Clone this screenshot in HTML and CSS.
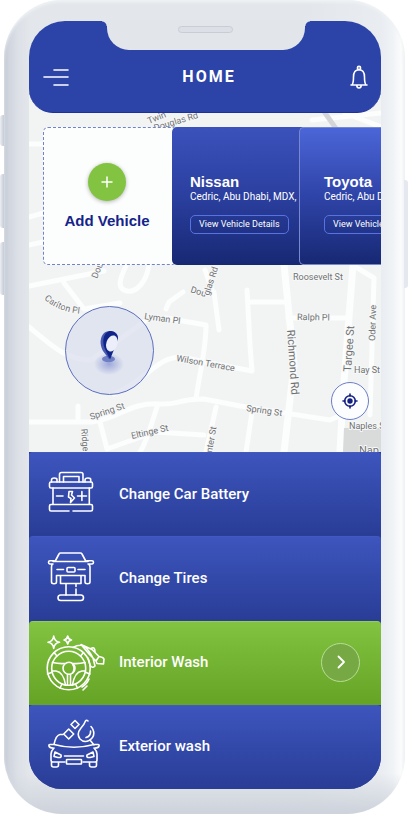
FILE: index.html
```html
<!DOCTYPE html>
<html lang="en">
<head>
<meta charset="utf-8">
<meta name="viewport" content="width=device-width, initial-scale=1">
<title>Home</title>
<link rel="stylesheet" href="styles.css">
</head>
<body>
<div class="phone">
  <span class="side-key side-key-mute"></span>
  <span class="side-key side-key-up"></span>
  <span class="side-key side-key-down"></span>
  <span class="side-key side-key-power"></span>
  <div class="notch"><span class="speaker"></span></div>
  <div class="screen">
    <header class="topbar">
      <button class="icon-button" aria-label="Menu">
        <svg width="26" height="24" viewBox="0 0 26 24"><path d="M11 5H25M1 12H25M11 20H25"/></svg>
      </button>
      <h1 class="title">HOME</h1>
      <button class="icon-button" aria-label="Notifications">
        <svg width="20" height="26" viewBox="0 0 20 26"><circle cx="10" cy="4" r="1.6"/><path d="M2 21H18M3 21C4.500 19 4.500 17 4.500 13C4.500 8.500 6.500 5.800 10 5.800S15.500 8.500 15.500 13C15.500 17 15.500 19 17 21M7.800 21.500C8 24.800 12 24.800 12.200 21.500"/></svg>
      </button>
    </header>

    <main>
      <section class="map">
        <svg class="map-canvas" viewBox="29 89 352 363" preserveAspectRatio="xMidYMin slice" aria-hidden="true">
          <g class="roads">
            <path d="M29 286L104 271M64 283L84 309L120 303M149 264C147 282 136 293 127 291C117 289 119 280 126 266M29 327C52 346 66 360 91 360L145 321M114 394C150 378 156 357 182 357L205 362L252 371L250 345L247 290M166 309L169 302L183 292M212 290L205 270M29 422H92C120 418 130 402 160 404C180 405 176 399 204 399L240 406L330 420L344 414M78 422V406M100 422L107 449M107 449L155 432L204 435M158 404C151 424 148 440 140 452M196 399C200 370 206 350 206 325L166 318M214 292L219 330M250 302H288M288 318H346M216 407L206 452M252 412L246 452"/>
            <path d="M29 217L75 204M29 245L70 236M29 144H70M70 130Q62 140 67 165M345 113L381 127M312 120L381 113M354 266L374 278L370 415M388 262L350 262"/>
            <path class="road-wide" d="M284 264L294 365L284 452M353 265L343 395L340 452"/>
          </g>
          <path class="block" d="M344 428H381V452H343Z"/>
          <path class="shade" d="M326 110L340 130H334L322 113Z"/>
          <path id="carlton" class="guide" d="M44 299Q58 312 82 314"/>
          <g class="labels">
            <text transform="translate(149 124) rotate(-22)">Twin</text>
            <text transform="translate(155 131) rotate(-17)">Douglas Rd</text>
            <text transform="translate(97 279) rotate(-68)">Douglas</text>
            <text><textPath href="#carlton">Carlton Pl</textPath></text>
            <text transform="translate(190 292) rotate(18)">Dou</text>
            <text transform="translate(209 296) rotate(-72)">glas Rd</text>
            <text transform="translate(144 319) rotate(8)">Lyman Pl</text>
            <text transform="translate(176 361) rotate(10)">Wilson Terrace</text>
            <text transform="translate(91 420) rotate(-19)">Spring St</text>
            <text transform="translate(132 439) rotate(-13)">Eltinge St</text>
            <text transform="translate(81 429) rotate(85)">Ridge</text>
            <text transform="translate(293 280)">Roosevelt St</text>
            <text transform="translate(297 320) rotate(1)">Ralph Pl</text>
            <text transform="translate(375 341) rotate(-88)">Oder Ave</text>
            <text transform="translate(354 373)">Hay St</text>
            <text transform="translate(246 411) rotate(8)">Spring St</text>
            <text transform="translate(349 429)">Naples S</text>
            <text transform="translate(212 453) rotate(-80)">nter St</text>
            <text class="label-large" transform="translate(287 330) rotate(86)">Richmond Rd</text>
            <text class="label-large" transform="translate(351 372) rotate(-86)">Targee St</text>
            <text class="label-large" transform="translate(359 454)">Nap</text>
          </g>
        </svg>

        <div class="vehicles">
          <button class="add-card">
            <span class="add-badge"><svg width="12" height="12" viewBox="0 0 12 12"><path d="M6 1V11M1 6H11"/></svg></span>
            <span class="add-label">Add Vehicle</span>
          </button>
          <article class="vehicle">
            <h2>Nissan</h2>
            <p>Cedric, Abu Dhabi, MDX,</p>
            <a class="details" href="#nissan">View Vehicle Details</a>
          </article>
          <article class="vehicle vehicle-next">
            <h2>Toyota</h2>
            <p>Cedric, Abu Dhabi, MDX,</p>
            <a class="details" href="#toyota">View Vehicle Details</a>
          </article>
        </div>

        <div class="pin">
          <svg width="40" height="50" viewBox="0 0 40 50">
            <defs><radialGradient id="glow"><stop offset="0" stop-color="#5a6bc4" stop-opacity=".5"/><stop offset="1" stop-color="#5a6bc4" stop-opacity="0"/></radialGradient></defs>
            <ellipse cx="19" cy="38" rx="15" ry="11" fill="url(#glow)"/>
            <ellipse cx="18.500" cy="33" rx="6.500" ry="3.200" fill="#6f7fc4"/>
            <path d="M19 33L13 25C8 16 11 5 20 5C25 5 28 8 28 12L23 24Z" fill="#4557ae"/>
            <path d="M20 33.500L15.500 24C11 15 14 5 21 5C26 6 28 9 28 13L23 26Z" fill="#0f2388"/>
            <ellipse cx="22" cy="17.500" rx="5.500" ry="8.300" transform="rotate(18 22 17)" fill="#eceffa"/>
          </svg>
        </div>
        <button class="locate" aria-label="My location">
          <svg width="16" height="16" viewBox="0 0 16 16"><circle cx="8" cy="8" r="5.300"/><path d="M8 1V3M8 13V15M1 8H3M13 8H15"/><circle class="dot" cx="8" cy="8" r="2.700"/></svg>
        </button>
      </section>

      <nav class="services">
        <button class="service">
          <svg class="service-icon" viewBox="0 0 62 60"><rect x="4.500" y="18" width="43" height="6" rx="1.500"/><path d="M14.500 18V10.500Q14.500 8.500 16.500 8.500H36Q38 8.500 38 10.500V18M18.500 18V12.500H34V18M6.500 18V16Q6.500 14 9.300 14T12 16V18M40 18V16Q40 14 43 14T45.700 16V18M8 24V40.500M44.300 24V40.500M24 47H6Q4.500 47 4.500 45.500V42Q4.500 40.500 6 40.500H46Q47.500 40.500 47.500 42V45.500Q47.500 47 46 47H28M11.500 32H18M32.500 32H41.500M36.900 27.500V36.500M24 27.500H27.500L26.500 31L29.500 34L25.500 38.500L26 34.500L23.500 33Z"/></svg>
          <span>Change Car Battery</span>
        </button>
        <button class="service">
          <svg class="service-icon" viewBox="0 0 62 60"><path d="M10 13.500L14 6Q14.500 5 15.500 5H35.500Q36.500 5 37 6L41 13.500M9 12.800H5Q3.500 12.800 3.500 14.200T5 16H8M42 12.800H47Q48.500 12.800 48.500 14.200T47 16H43M8 13.500H43M7.500 16Q6.500 17 6.500 19V34Q6.500 35.700 9 35.700T11.500 34V27.500H40V34Q40 35.700 42.500 35.700T45 34V19Q45 17 43.500 16M12 21.500H18.500M33 21.500H40M15.500 27.500V35.500H36V27.500M21 36V47M31 36V38.500M31 41V47"/><rect x="22" y="19.500" width="8" height="4.500" rx="1"/><rect x="13" y="47" width="25.500" height="5.500" rx="2.700"/></svg>
          <span>Change Tires</span>
        </button>
        <button class="service service-active">
          <svg class="service-icon" viewBox="0 0 62 60"><path d="M8.700 4Q9.500 9.500 14.500 10.300Q9.500 11 8.700 16.500Q8 11 3 10.300Q8 9.500 8.700 4ZM22.700 4Q23.300 7.500 26.500 8Q23.300 8.500 22.700 12Q22 8.500 19 8Q22 7.500 22.700 4Z"/><circle cx="23.700" cy="36.300" r="21.500"/><circle cx="23.700" cy="36.300" r="17"/><circle cx="24" cy="36.300" r="6"/><path d="M7.500 30.500Q14 32 20 31.500M28 31.500Q34 32 40 30.500M7 39H11Q18.500 40 20.500 53M40.500 39H37Q29.500 40 27.500 53M22.500 42.500V53M25.500 42.500V53M9 20.500L12 24M38.500 20.500L35.500 24M2.500 42L6.500 40.500M45 42L41 40.500M15 56L17 52M32.500 56L30.500 52M27.500 32Q30.500 36.500 27.500 41M28 15.500Q34 12 39 14Q44 18 48 26L50 34Q47 37 45 33L43 26M36 12.500L47 17.500L54 24.500L51 29L44 22ZM46 16.500Q50 14 50 20M54 24.500Q58 25 59 27L58.500 32L52 31.500L51 29M44 47Q42 52 37 55M42 54L38 58"/></svg>
          <span>Interior Wash</span>
          <i class="go"><svg width="10" height="14" viewBox="0 0 10 14"><path d="M2.500 1.500L8 7L2.500 12.500"/></svg></i>
        </button>
        <button class="service">
          <svg class="service-icon" viewBox="0 0 62 60"><path d="M9 28.500Q11 19 15 18.500L18 18.500M23.700 13L28.700 18L23.700 23L18.700 18ZM30 4.500L34 8.500L30 12.500L26 8.500ZM43 5Q41.500 3.500 40.500 5Q39 9 36 12Q31 18 35 23Q39 27 44 24.500Q50 21 48.500 15Q48 12.500 46 10.500M45.500 15Q46 20 41 21.500M45 24L49 29M9 28.500H5Q3.500 28.500 4 30Q4.500 32 8 32M9 28.500Q29 34 49 28.500H53Q54.500 28.500 54 30Q53.500 32 50 32M9 32Q6 35 6 38V44Q6 46 8 46H20M38 46H50Q52 46 52 44V38Q52 35 49 32M10 36L16 39Q17 42 13 41.500L9 40.500ZM48 36L42 39Q41 42 45 41.500L49 40.500ZM19.500 40H38.500M6.500 46V49Q6.500 51 8.500 51H11.500Q13.500 51 13.500 49V46M44.500 46V49Q44.500 51 46.500 51H49.500Q51.500 51 51.500 49V46"/><rect x="21.500" y="43.500" width="15" height="4.500" rx=".5"/></svg>
          <span>Exterior wash</span>
        </button>
      </nav>
    </main>
  </div>
</div>
</body>
</html>
```
FILE: styles.css
```css
* {
  box-sizing: border-box;
}

body {
  margin: 0;
  background: #fff;
  font-family: Roboto, "Liberation Sans", sans-serif;
}

button {
  margin: 0;
  padding: 0;
  border: 0;
  background: none;
  color: inherit;
  font: inherit;
  cursor: pointer;
}

svg {
  display: block;
  fill: none;
  stroke-linecap: round;
  stroke-linejoin: round;
}

/* Device frame */
.phone {
  position: relative;
  margin: 0 4px;
  padding: 21px 24px 25px 25px;
  border-radius: 58px;
  background:
    linear-gradient(to bottom, rgba(226, 231, 235, 0) 95%, #cdd2db 100%),
    linear-gradient(to right, #c3c9d4 0, #d0d5de 5px, #dce0e7 14px, #e3e7eb 26px, #e3e7eb 75%, #e9edf1 calc(100% - 24px), #f0f3f6 calc(100% - 12px), #fbfcfc calc(100% - 4px), #eef0f4 100%);
  box-shadow: inset 0 2px 3px #f0f3f5;
}

.side-key {
  position: absolute;
  left: -4px;
  width: 4px;
  border-radius: 3px 0 0 3px;
  background: linear-gradient(to right, #eceef2, #c6cbd6);
}

.side-key-mute {
  top: 115px;
  height: 31px;
}

.side-key-up {
  top: 174px;
  height: 54px;
}

.side-key-down {
  top: 242px;
  height: 53px;
}

.side-key-power {
  top: 180px;
  right: -3px;
  left: auto;
  height: 108px;
  border-radius: 0 3px 3px 0;
  background: #e5e8ee;
}

.notch {
  position: absolute;
  z-index: 3;
  top: 20px;
  left: 50%;
  width: 198px;
  height: 30px;
  margin-left: -98px;
  border-radius: 0 0 22px 22px;
  background: #e2e6eb;
}

.notch::before,
.notch::after {
  content: "";
  position: absolute;
  top: 1px;
  width: 5px;
  height: 5px;
}

.notch::before {
  right: 100%;
  background: radial-gradient(circle at 0 100%, #2c43a8 4px, #e2e6eb 5px);
}

.notch::after {
  left: 100%;
  background: radial-gradient(circle at 100% 100%, #2c43a8 4px, #e2e6eb 5px);
}

.speaker {
  display: block;
  width: 55px;
  height: 7px;
  margin: 6px auto 0;
  border: 1px solid #c8ccd5;
  border-radius: 4px;
  background: #dce0e6;
}

.screen {
  overflow: hidden;
  border-radius: 36px 36px 33px 33px;
  background: #f2f4f4;
}

/* Top bar */
.topbar {
  position: relative;
  z-index: 2;
  display: flex;
  align-items: center;
  justify-content: space-between;
  padding: 40px 12px 19px 14px;
  border-bottom: 1px solid #1e319a;
  border-radius: 0 0 24px 24px;
  background: #2c43a8;
  color: #fff;
}

.icon-button {
  height: 32px;
  display: flex;
  align-items: center;
}

.icon-button svg {
  stroke: #fff;
  stroke-width: 1.6;
}

.title {
  margin: 0;
  font-size: 16px;
  line-height: 32px;
  font-weight: 700;
  letter-spacing: 2px;
}

/* Map */
.map {
  position: relative;
  min-height: 363px;
  margin-top: -24px;
  padding: 38px 0 0 14px;
}

.map-canvas {
  position: absolute;
  inset: 0;
  width: 100%;
  height: 100%;
}

.roads path {
  stroke: #fcfdfd;
  stroke-width: 5;
}

.roads .road-wide {
  stroke-width: 7;
}

.block {
  fill: #d9dada;
}

.shade {
  fill: #d3d5d6;
}

.guide {
  stroke: none;
}

.labels text {
  fill: #707273;
  stroke: #f7f8f8;
  stroke-width: 2px;
  paint-order: stroke;
  font-size: 9px;
}

.labels .label-large {
  font-size: 11px;
}

/* Vehicle cards */
.vehicles {
  position: relative;
  display: flex;
  height: 138px;
  overflow: hidden;
}

.add-card {
  flex: none;
  display: flex;
  flex-direction: column;
  align-items: center;
  gap: 10px;
  width: 134px;
  padding: 35px 6px 0 0;
  border: 1px dashed #7283c8;
  border-radius: 5px;
  background: #fcfdfd;
}

.add-badge {
  display: grid;
  place-items: center;
  width: 38px;
  height: 38px;
  border-radius: 50%;
  background: #82c341;
  box-shadow: 0 1px 4px rgba(0, 0, 0, 0.3);
}

.add-badge svg {
  stroke: #fff;
  stroke-width: 1.5;
}

.add-label {
  color: #14248a;
  font-family: "Liberation Sans", sans-serif;
  font-size: 15px;
  line-height: 20px;
  font-weight: 700;
}

.vehicle {
  flex: none;
  width: 134px;
  margin-left: -5px;
  padding: 46px 0 0 18px;
  border-radius: 5px;
  background: linear-gradient(#3b52bc, #2b3f9f 50%, #172873);
  color: #fff;
  white-space: nowrap;
}

.vehicle-next {
  width: 144px;
  margin-left: -7px;
  padding-left: 24px;
  border: 1px solid #7888cf;
  border-right: 0;
  padding-top: 45px;
  background: linear-gradient(#4b66d8, #2f44a8 50%, #172873);
}

.vehicle h2 {
  margin: 0;
  font-family: "Liberation Sans", sans-serif;
  font-size: 15px;
  line-height: 18px;
}

.vehicle p {
  margin: 0 0 12px;
  font-size: 10px;
  line-height: 12px;
}

.details {
  display: block;
  width: fit-content;
  padding: 0 8px;
  border: 1px solid #5872e0;
  border-radius: 5px;
  color: #fff;
  font-size: 9px;
  line-height: 17px;
  text-decoration: none;
}

/* Map markers */
.pin {
  position: absolute;
  top: 217px;
  left: 36px;
  display: grid;
  place-items: center;
  width: 89px;
  height: 89px;
  border: 1px solid #5c6fbf;
  border-radius: 50%;
  background: rgba(213, 218, 237, 0.6);
}

.locate {
  position: absolute;
  top: 293px;
  right: 12px;
  display: grid;
  place-items: center;
  width: 38px;
  height: 38px;
  border: 1px solid #6c7dc6;
  border-radius: 50%;
  background: #fcfdfe;
}

.locate svg {
  stroke: #111f80;
  stroke-width: 1.6;
}

.locate .dot {
  fill: #111f80;
  stroke: none;
}

/* Services */
.services {
  position: relative;
  display: grid;
  grid-auto-rows: 1fr;
  min-height: 337px;
  background: #2a3d97;
}

.service {
  display: flex;
  align-items: center;
  gap: 12px;
  padding: 0 21px 2px 16px;
  border-top: 1px solid #4259c0;
  border-radius: 4px 4px 0 0;
  background: linear-gradient(#3d55bd, #293d96);
  color: #fff;
  font-size: 15px;
  line-height: 20px;
  font-weight: 500;
  text-align: left;
}

.service-active {
  border-top-color: #93d04f;
  background: linear-gradient(#82c341, #65a324);
}

.service-icon {
  flex: none;
  width: 62px;
  height: 60px;
  stroke: #fff;
  stroke-width: 1.6;
}

.go {
  display: grid;
  place-items: center;
  width: 39px;
  height: 39px;
  margin-left: auto;
  border: 1px solid #b9dc96;
  border-radius: 50%;
  background: #76a944;
}

.go svg {
  stroke: #fff;
  stroke-width: 1.8;
}
```
